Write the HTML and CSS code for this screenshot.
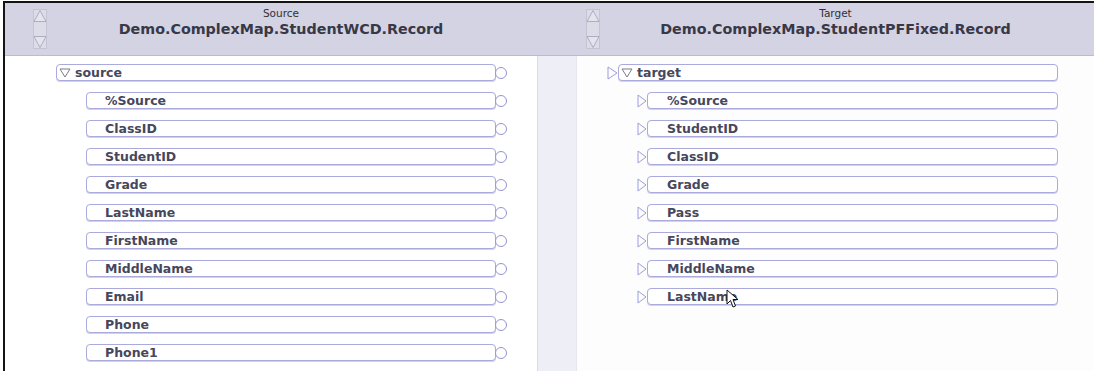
FILE: index.html
```html
<!DOCTYPE html>
<html lang="en">
<head>
  <meta charset="UTF-8">
  <title>Data Transformation - Source / Target</title>
  <link rel="stylesheet" href="styles.css">
</head>
<body>

<div class="mapper">
  <div class="header">
    <div class="head-cell head-source">
      <svg class="scroller" width="14" height="40" viewBox="0 0 14 40">
        <rect x="0.5" y="0.5" width="13" height="39" fill="#dcdce9" stroke="#c4c4d4"/>
        <polygon points="7,1.5 13,12.5 1,12.5" fill="#e4e4ef" stroke="#aeaec2"/>
        <polygon points="1,27.5 13,27.5 7,38.5" fill="#e4e4ef" stroke="#aeaec2"/>
      </svg>
      <div class="head-title">
        <span class="head-label">Source</span>
        <span class="head-name">Demo.ComplexMap.StudentWCD.Record</span>
      </div>
    </div>
    <div class="head-cell head-target">
      <svg class="scroller" width="14" height="40" viewBox="0 0 14 40">
        <rect x="0.5" y="0.5" width="13" height="39" fill="#dcdce9" stroke="#c4c4d4"/>
        <polygon points="7,1.5 13,12.5 1,12.5" fill="#e4e4ef" stroke="#aeaec2"/>
        <polygon points="1,27.5 13,27.5 7,38.5" fill="#e4e4ef" stroke="#aeaec2"/>
      </svg>
      <div class="head-title">
        <span class="head-label">Target</span>
        <span class="head-name">Demo.ComplexMap.StudentPFFixed.Record</span>
      </div>
    </div>
  </div>

  <div class="body">
    <div class="panel panel-source">
      <div class="row row-root">
        <div class="box">
          <svg class="tri-down" width="12" height="10" viewBox="0 0 12 10"><polygon points="1,1 11,1 6,9" fill="none" stroke="#7a7a8a"/></svg>
          <span class="name">source</span>
        </div>
        <span class="port"></span>
      </div>
      <div class="row row-child"><div class="box"><span class="name">%Source</span></div><span class="port"></span></div>
      <div class="row row-child"><div class="box"><span class="name">ClassID</span></div><span class="port"></span></div>
      <div class="row row-child"><div class="box"><span class="name">StudentID</span></div><span class="port"></span></div>
      <div class="row row-child"><div class="box"><span class="name">Grade</span></div><span class="port"></span></div>
      <div class="row row-child"><div class="box"><span class="name">LastName</span></div><span class="port"></span></div>
      <div class="row row-child"><div class="box"><span class="name">FirstName</span></div><span class="port"></span></div>
      <div class="row row-child"><div class="box"><span class="name">MiddleName</span></div><span class="port"></span></div>
      <div class="row row-child"><div class="box"><span class="name">Email</span></div><span class="port"></span></div>
      <div class="row row-child"><div class="box"><span class="name">Phone</span></div><span class="port"></span></div>
      <div class="row row-child"><div class="box"><span class="name">Phone1</span></div><span class="port"></span></div>
    </div>

    <div class="gutter"></div>

    <div class="panel panel-target">
      <div class="row row-root">
        <svg class="tri-in" width="11" height="14" viewBox="0 0 11 14"><polygon points="1,1 10,7 1,13" fill="none" stroke="#9c9cdc"/></svg>
        <div class="box">
          <svg class="tri-down" width="12" height="10" viewBox="0 0 12 10"><polygon points="1,1 11,1 6,9" fill="none" stroke="#7a7a8a"/></svg>
          <span class="name">target</span>
        </div>
      </div>
      <div class="row row-child"><svg class="tri-in" width="10" height="14" viewBox="0 0 10 14"><polygon points="1,1 9,7 1,13" fill="none" stroke="#9c9cdc"/></svg><div class="box"><span class="name">%Source</span></div></div>
      <div class="row row-child"><svg class="tri-in" width="10" height="14" viewBox="0 0 10 14"><polygon points="1,1 9,7 1,13" fill="none" stroke="#9c9cdc"/></svg><div class="box"><span class="name">StudentID</span></div></div>
      <div class="row row-child"><svg class="tri-in" width="10" height="14" viewBox="0 0 10 14"><polygon points="1,1 9,7 1,13" fill="none" stroke="#9c9cdc"/></svg><div class="box"><span class="name">ClassID</span></div></div>
      <div class="row row-child"><svg class="tri-in" width="10" height="14" viewBox="0 0 10 14"><polygon points="1,1 9,7 1,13" fill="none" stroke="#9c9cdc"/></svg><div class="box"><span class="name">Grade</span></div></div>
      <div class="row row-child"><svg class="tri-in" width="10" height="14" viewBox="0 0 10 14"><polygon points="1,1 9,7 1,13" fill="none" stroke="#9c9cdc"/></svg><div class="box"><span class="name">Pass</span></div></div>
      <div class="row row-child"><svg class="tri-in" width="10" height="14" viewBox="0 0 10 14"><polygon points="1,1 9,7 1,13" fill="none" stroke="#9c9cdc"/></svg><div class="box"><span class="name">FirstName</span></div></div>
      <div class="row row-child"><svg class="tri-in" width="10" height="14" viewBox="0 0 10 14"><polygon points="1,1 9,7 1,13" fill="none" stroke="#9c9cdc"/></svg><div class="box"><span class="name">MiddleName</span></div></div>
      <div class="row row-child"><svg class="tri-in" width="10" height="14" viewBox="0 0 10 14"><polygon points="1,1 9,7 1,13" fill="none" stroke="#9c9cdc"/></svg><div class="box"><span class="name">LastName</span></div></div>

      <!-- mouse pointer over LastName -->
      <svg class="cursor" width="13" height="20" viewBox="0 0 13 20">
        <polygon points="1,1 1,15 4.5,11.5 7,18 9.5,17 7,10.5 12,10.5" fill="#fff" stroke="#111" stroke-width="1"/>
      </svg>
    </div>
  </div>
</div>

</body>
</html>
```

FILE: styles.css
```css
body {
  margin: 0;
  background-color: #fff;
  font-family: "DejaVu Sans", Verdana, sans-serif;
  overflow: hidden;
}
.mapper {
  margin: 1px 0 0 3px;
  height: 370px;
  border-top: 2px solid #141414;
  border-left: 2px solid #141414;
  display: flex;
  flex-direction: column;
}
.header {
  height: 52px;
  flex-shrink: 0;
  display: flex;
  background-color: #d3d3e4;
  border-bottom: 1px solid #bcbccb;
}
.head-cell {
  display: grid;
}
.head-source {
  width: 552px;
}
.head-target {
  flex: 1;
  margin-left: 20px;
}
.scroller {
  grid-area: 1 / 1;
  align-self: start;
  justify-self: start;
  margin-top: 6px;
}
.head-source .scroller {
  margin-left: 28px;
}
.head-target .scroller {
  margin-left: 9px;
}
.head-title {
  grid-area: 1 / 1;
  display: flex;
  flex-direction: column;
  align-items: center;
  padding-top: 4px;
}
.head-label {
  font-size: 10.5px;
  line-height: 13px;
  color: #303038;
}
.head-name {
  font-size: 14.3px;
  font-weight: bold;
  line-height: 19px;
  color: #383846;
}
.body {
  flex: 1;
  display: flex;
  overflow: hidden;
}
.panel {
  padding-top: 8px;
}
.panel-source {
  width: 532px;
  background-color: #fff;
}
.gutter {
  width: 38px;
  background-color: #eeeef6;
  border-left: 1px solid #dcdce8;
  border-right: 1px solid #e6e6ee;
}
.panel-target {
  flex: 1;
  position: relative;
  background-color: #fdfdfd;
}
.row {
  display: flex;
  align-items: center;
  height: 17px;
  margin-bottom: 11px;
}
.box {
  box-sizing: border-box;
  height: 17px;
  display: flex;
  align-items: center;
  background-color: #fff;
  border: 1px solid #aaaadc;
  border-radius: 4px;
  box-shadow: 0 1px 0 #d2d2ec;
}
.name {
  font-size: 12.5px;
  font-weight: bold;
  color: #47475c;
  white-space: nowrap;
}
.tri-down {
  margin: 0 4px 0 2px;
}
.panel-source .row-root {
  margin-left: 51px;
}
.panel-source .row-root .box {
  width: 440px;
}
.panel-source .row-child {
  margin-left: 81px;
}
.panel-source .row-child .box {
  width: 410px;
  padding-left: 18px;
}
.port {
  box-sizing: border-box;
  width: 12px;
  height: 12px;
  margin-left: -1px;
  border: 1px solid #9494d4;
  border-radius: 50%;
  background-color: #fff;
}
.panel-target .row-root {
  margin-left: 30px;
}
.panel-target .row-root .box {
  width: 440px;
}
.panel-target .row-child {
  margin-left: 60px;
}
.panel-target .row-child .box {
  width: 411px;
  padding-left: 19px;
}
.cursor {
  position: absolute;
  left: 149px;
  top: 233px;
}
```
